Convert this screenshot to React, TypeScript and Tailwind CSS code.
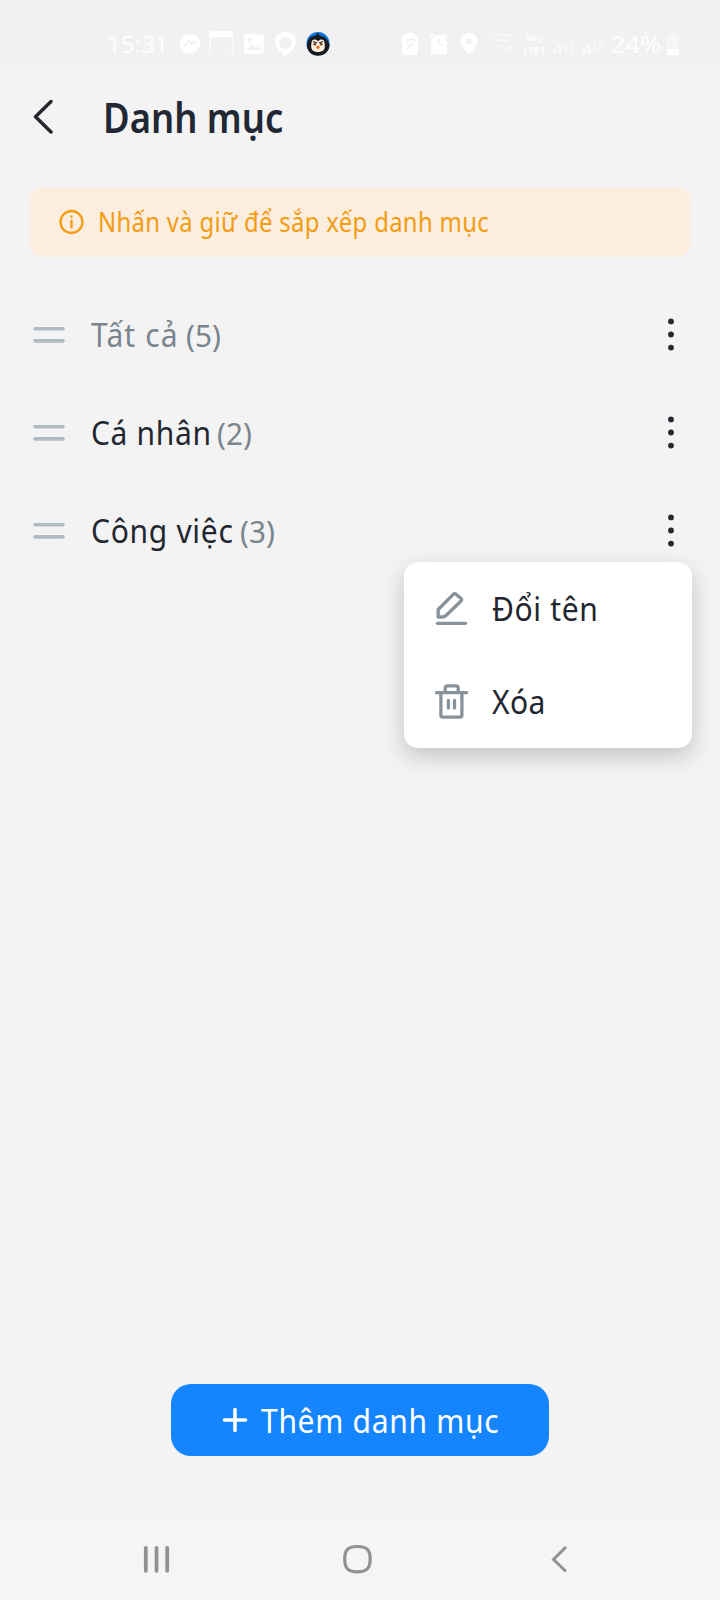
import React from "react";

function StatusBar() {
  return (
    <div className="flex h-[64px] shrink-0 items-center bg-[#f1f1f2] pt-[23px] pl-[107px] text-white/85">
      <span className="w-[73px] text-[24px] leading-[42px] whitespace-nowrap">15:31</span>
      <svg className="h-[42px] w-[155px]" viewBox="180 23 155 42" fill="none">
        <path d="M190 34c-6 0-10 4-10 9.500 0 3 1.200 5.500 3.500 7.300v3.700l3.300-1.900c1 .3 2 .4 3.200.4 6 0 10-4 10-9.500S196 34 190 34z" fill="#fff" />
        <path d="m184 46 5-5 3 3 4-3" stroke="#f1f1f1" strokeWidth="2" />
        <path d="M210 36v18h4m15 0h4V37" stroke="#f9f9f9" strokeWidth="2" />
        <path d="M209 35c0-3 1-4 4-4h20v6h-24z" fill="#fff" />
        <rect x="244" y="34" width="20" height="20" rx="4" fill="#fff" />
        <path d="m247 50 5-6 4 4 2-2 4 4z" fill="#f1f1f1" />
        <circle cx="250" cy="40" r="2" fill="#f1f1f1" />
        <path d="M285 32c-6 0-10 4-10 10 0 5 5 10 10 14 5-4 11-9 11-14 0-6-5-10-11-10z" fill="#fff" />
        <circle cx="285.500" cy="43" r="6" fill="#f1f1f1" />
        <circle cx="318" cy="43.700" r="11.600" fill="#0c72d8" />
        <path d="M307 45c1-6 4-9 8-9l3-3 2 3c5 0 8 4 9.500 9 0 6-5 10.800-11.500 10.800S307 51 307 45z" fill="#191a1d" />
        <path d="M311.500 43c0-4 4-4.500 6.500-1.500 2.500-3 6.500-2.500 6.500 1.500 1.500 7-2 9-6.500 9s-8-2-6.500-9z" fill="#fff0dc" />
        <path d="m313 41.500 4 1.500m6-1.500-4 1.500" stroke="#222" strokeWidth="1.300" />
        <circle cx="314.800" cy="44.300" r="1.300" fill="#6b3a1c" />
        <circle cx="321.200" cy="44.300" r="1.300" fill="#6b3a1c" />
        <path d="m316 47 2-1.500 2 1.500-2 2.500z" fill="#f06418" />
      </svg>
      <svg className="ml-[65px] h-[42px] w-[211px]" viewBox="400 23 211 42" fill="none">
        <path d="M406 33h8v2c3 0 4 1 4 4v12c0 3-1 4-4 4h-8c-3 0-4-1-4-4V39c0-3 1-4 4-4z" fill="#fff" />
        <path d="M406.500 44c0-5 4-5 7.500-5 0 5-2 8-5 7m-2 3 4-5" stroke="#f1f1f1" strokeWidth="1.300" />
        <path d="M439 35c-5 0-8 3-8 8v11h16V43c0-5-3-8-8-8z" fill="#fff" />
        <path d="m430 38 4-4m14 4-4-4" stroke="#fff" strokeWidth="2" />
        <path d="M439 39v5l4 2" stroke="#f1f1f1" strokeWidth="1.500" />
        <path d="M469 33c-5 0-8.500 3-8.500 8 0 4.500 4.500 9 8.500 13 4-4 8.500-8.500 8.500-13 0-5-3.500-8-8.500-8z" fill="#fff" />
        <circle cx="469" cy="41.500" r="3" fill="#f1f1f1" />
        <path d="M492 37c6-4 14-4 20 0m-17 5c5-3 9-3 14 0m-11 5c3-2 5-2 8 0m-3 5h4m3 2v-7m-2 2 2-2 2 2" stroke="#f8f8f8" strokeWidth="2" />
        <g fill="#fff" fontFamily="Noto Sans, sans-serif" fontWeight="600">
          <text x="526" y="40.500" fontSize="9">Vo))</text>
          <text x="523" y="54.500" fontSize="10">LTE1</text>
        </g>
        <path d="M555 53v-4m5 4v-8m24 8v-4m5 4v-8" stroke="#fbfbfd" strokeWidth="3" />
        <path d="M566 53V41m6 12V37m23 16V41m5 12V37" stroke="#f5f5f8" strokeWidth="3" />
      </svg>
      <span className="w-[55px] origin-left scale-x-[1.06] text-[24px] leading-[42px] whitespace-nowrap">24%</span>
      <svg className="h-[42px] w-[14px]" viewBox="0 0 14 42">
        <path d="M4 10h6v2h3v20H1V12h3z" fill="#f6f6f8" />
        <path d="M1 26h12v6H1z" fill="#fff" />
      </svg>
    </div>
  );
}

interface RowProps {
  name: string;
  count: number;
  nameClass: string;
}

function CategoryRow({ name, count, nameClass }: RowProps) {
  return (
    <div className="flex h-[98px] items-center pl-[33px]">
      <svg className="h-8 w-8" viewBox="0 0 32 32" stroke="#b0bac1" strokeWidth="3.600" strokeLinecap="round">
        <path d="M2 9.700h28M2 21.900h28" />
      </svg>
      <div className="mt-[1px] ml-[26px] flex w-[561px] items-baseline leading-[44px] whitespace-nowrap">
        <span className={`${nameClass} text-[33px]`}>
          <span className="inline-block origin-left scale-x-[0.91]">{name}</span>
        </span>
        <span className="inline-block origin-left scale-x-[0.99] text-[30px] text-[#7b858d]">({count})</span>
      </div>
      <svg className="ml-[9px] h-10 w-5" viewBox="0 0 20 40" fill="#262830">
        <circle cx="10" cy="6.400" r="2.900" />
        <circle cx="10" cy="19.500" r="2.900" />
        <circle cx="10" cy="32.600" r="2.900" />
      </svg>
    </div>
  );
}

function ContextMenu() {
  return (
    <div className="absolute top-[276.500px] left-[404px] flex h-[186px] w-[288px] flex-col rounded-[14px] bg-white shadow-[0_8px_22px_rgba(0,0,0,0.2)]">
      <div className="flex h-[93px] items-center pl-[30px]">
        <svg className="h-9 w-9" viewBox="0 0 36 36" fill="none" stroke="#87929a" strokeWidth="3.300" strokeLinecap="round" strokeLinejoin="round">
          <path d="M4.200 26V18.500L19.500 3.200c.8-.8 1.700-.8 2.500 0l5 4.300c.8.800.8 1.700 0 2.500L12 24.500c-1.200 1.200-2 1.500-4 1.500z" />
          <path d="M3.500 32.300h28" />
        </svg>
        <span className="ml-[22px] inline-block origin-left scale-x-[0.91] text-[33px] leading-[44px] tracking-[0.700px] text-[#22272f]">Đổi tên</span>
      </div>
      <div className="flex h-[93px] items-center pl-[30px]">
        <svg className="h-9 w-9" viewBox="0 0 36 36" fill="none" stroke="#87929a" strokeWidth="3.300" strokeLinecap="round" strokeLinejoin="round">
          <path d="M2.500 8.700h30M6.900 8.700V31c0 1.500.8 2.200 2.200 2.200h16.600c1.400 0 2.200-.7 2.200-2.200V8.700M11.200 8V4.200c0-1.600.8-2.400 2.400-2.400h8.200c1.600 0 2.400.8 2.400 2.400V8M14.400 16.500v7.500M20.500 16.500v7.500" />
        </svg>
        <span className="ml-[22px] inline-block origin-left scale-x-[0.91] text-[33px] leading-[44px] tracking-[0.400px] text-[#22272f]">Xóa</span>
      </div>
    </div>
  );
}

export default function App() {
  return (
    <div className="flex h-[1600px] w-[720px] flex-col overflow-hidden bg-[#f3f3f4] font-['Noto_Sans',sans-serif]">
      <StatusBar />
      <header className="flex h-[123.500px] shrink-0 items-start pt-[21px] pl-[33px]">
        <svg className="mt-[14px] h-9 w-5" viewBox="0 0 20 36" fill="none" stroke="#24272d" strokeWidth="3.500" strokeLinecap="round" strokeLinejoin="round">
          <path d="M18 2.500 2.500 17.800 18 33" />
        </svg>
        <h1 className="ml-[49.500px] origin-left scale-x-[0.888] text-[41px] leading-[64px] font-semibold whitespace-nowrap text-[#222734]">Danh mục</h1>
      </header>
      <div className="mx-[29px] flex h-[69px] shrink-0 items-center rounded-[14px] bg-[#fbeedf] pl-[30px] text-[#f39c12]">
        <svg className="h-[26px] w-[26px]" viewBox="0 0 26 26" fill="none" stroke="currentColor" strokeWidth="2.300" strokeLinecap="round">
          <circle cx="12.500" cy="13" r="11" />
          <path d="M12.500 11.800v6.500M12.500 7.500v.2" strokeWidth="2.400" />
        </svg>
        <span className="ml-[13px] inline-block origin-left scale-x-[0.9] text-[26.500px] leading-[36px] tracking-[0.370px] whitespace-nowrap">Nhấn và giữ để sắp xếp danh mục</span>
      </div>
      <main className="relative mt-[29px] flex-1">
        <CategoryRow name="Tất cả" count={5} nameClass="w-[94.500px] tracking-[1.200px] text-[#7b858d]" />
        <CategoryRow name="Cá nhân" count={2} nameClass="w-[126px] tracking-[0.700px] text-[#22272f]" />
        <CategoryRow name="Công việc" count={3} nameClass="w-[149px] tracking-[0.750px] text-[#22272f]" />
        <ContextMenu />
      </main>
      <button className="mb-[60px] ml-[171px] flex h-[72px] w-[378px] shrink-0 items-center rounded-[20px] bg-[#1585ff] pl-[50px] text-white">
        <svg className="h-7 w-7" viewBox="0 0 28 28" stroke="currentColor" strokeWidth="3.600" strokeLinecap="round">
          <path d="M14 3.500v21M3.500 14h21" />
        </svg>
        <span className="mt-[2px] ml-[11.500px] inline-block origin-left scale-x-[0.91] text-[33px] leading-[44px] tracking-[0.750px] whitespace-nowrap">Thêm danh mục</span>
      </button>
      <nav className="flex h-[84px] shrink-0 items-center bg-[#f5f5f5] pt-[2px] pl-[141px]">
        <svg className="h-8 w-8" viewBox="0 0 32 32" stroke="#929292" strokeWidth="3.800" strokeLinecap="round">
          <path d="M4.800 4.800v23M15.500 4.800v23M26.200 4.800v23" />
        </svg>
        <svg className="ml-[168px] h-8 w-8" viewBox="0 0 32 32" fill="none" stroke="#929292" strokeWidth="3.200">
          <path d="M16.300 3.500C25 3.500 29.200 6 29.200 16s-4.200 12.800-12.900 12.800S3.700 26 3.700 16 7.600 3.500 16.300 3.500z" />
        </svg>
        <svg className="ml-[172px] h-8 w-8" viewBox="0 0 32 32" fill="none" stroke="#929292" strokeWidth="3">
          <path d="M21 4 8.500 16.500 21 28.500" />
        </svg>
      </nav>
    </div>
  );
}
